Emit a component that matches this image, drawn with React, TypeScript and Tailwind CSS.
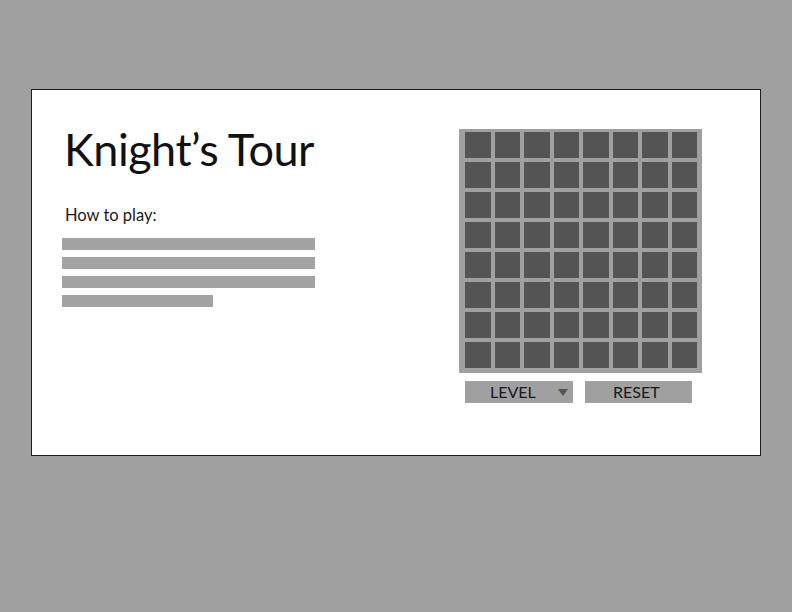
const ROWS = Array.from({ length: 64 }, (_, i) => i);

const HOW_TO_BARS = ["w-[253px]", "w-[253px]", "w-[253px]", "w-[151px]"];

export default function App() {
  return (
    <div className="min-h-screen bg-[#a0a0a0] pt-[89px] font-['Lato',sans-serif]">
      <div className="mx-auto flex h-[367px] w-[730px] border border-[#1c1c1c] bg-white">
        {/* left column: title + instructions */}
        <div className="w-[427px] pl-[30px] pt-[37px]">
          <h1 className="pl-[2px] text-[45px] leading-none tracking-[-0.5px] text-[#111]">Knight’s Tour</h1>
          <p className="mt-[33px] pl-[3px] text-[16.5px] leading-[20px] text-[#1a1a1a]">How to play:</p>
          <div className="mt-[13px] flex flex-col gap-[7px]">
            {HOW_TO_BARS.map((w, i) => (
              <div key={i} className={`h-[12px] bg-[#a3a3a3] ${w}`} />
            ))}
          </div>
        </div>

        {/* right column: board + controls */}
        <div className="pt-[39px]">
          <div className="grid h-[244px] w-[243px] grid-cols-8 grid-rows-8 gap-[4px] bg-[#a0a0a0] pb-[5px] pl-[6px] pr-[5px] pt-[3px]">
            {ROWS.map((i) => (
              <div key={i} className="bg-[#545454]" />
            ))}
          </div>
          <div className="mt-[8px] flex gap-[12px] pl-[6px]">
            <button className="flex h-[22px] w-[108px] items-center justify-between bg-[#a0a0a0] pl-[25px] pr-[5px] text-[16px] text-[#1a1a1a]">
              LEVEL
              <span className="h-0 w-0 border-l-[5px] border-r-[5px] border-t-[7px] border-l-transparent border-r-transparent border-t-[#555]" />
            </button>
            <button className="flex h-[22px] w-[107px] items-center bg-[#a0a0a0] pl-[28px] text-[16px] text-[#1a1a1a]">
              RESET
            </button>
          </div>
        </div>
      </div>
    </div>
  );
}
